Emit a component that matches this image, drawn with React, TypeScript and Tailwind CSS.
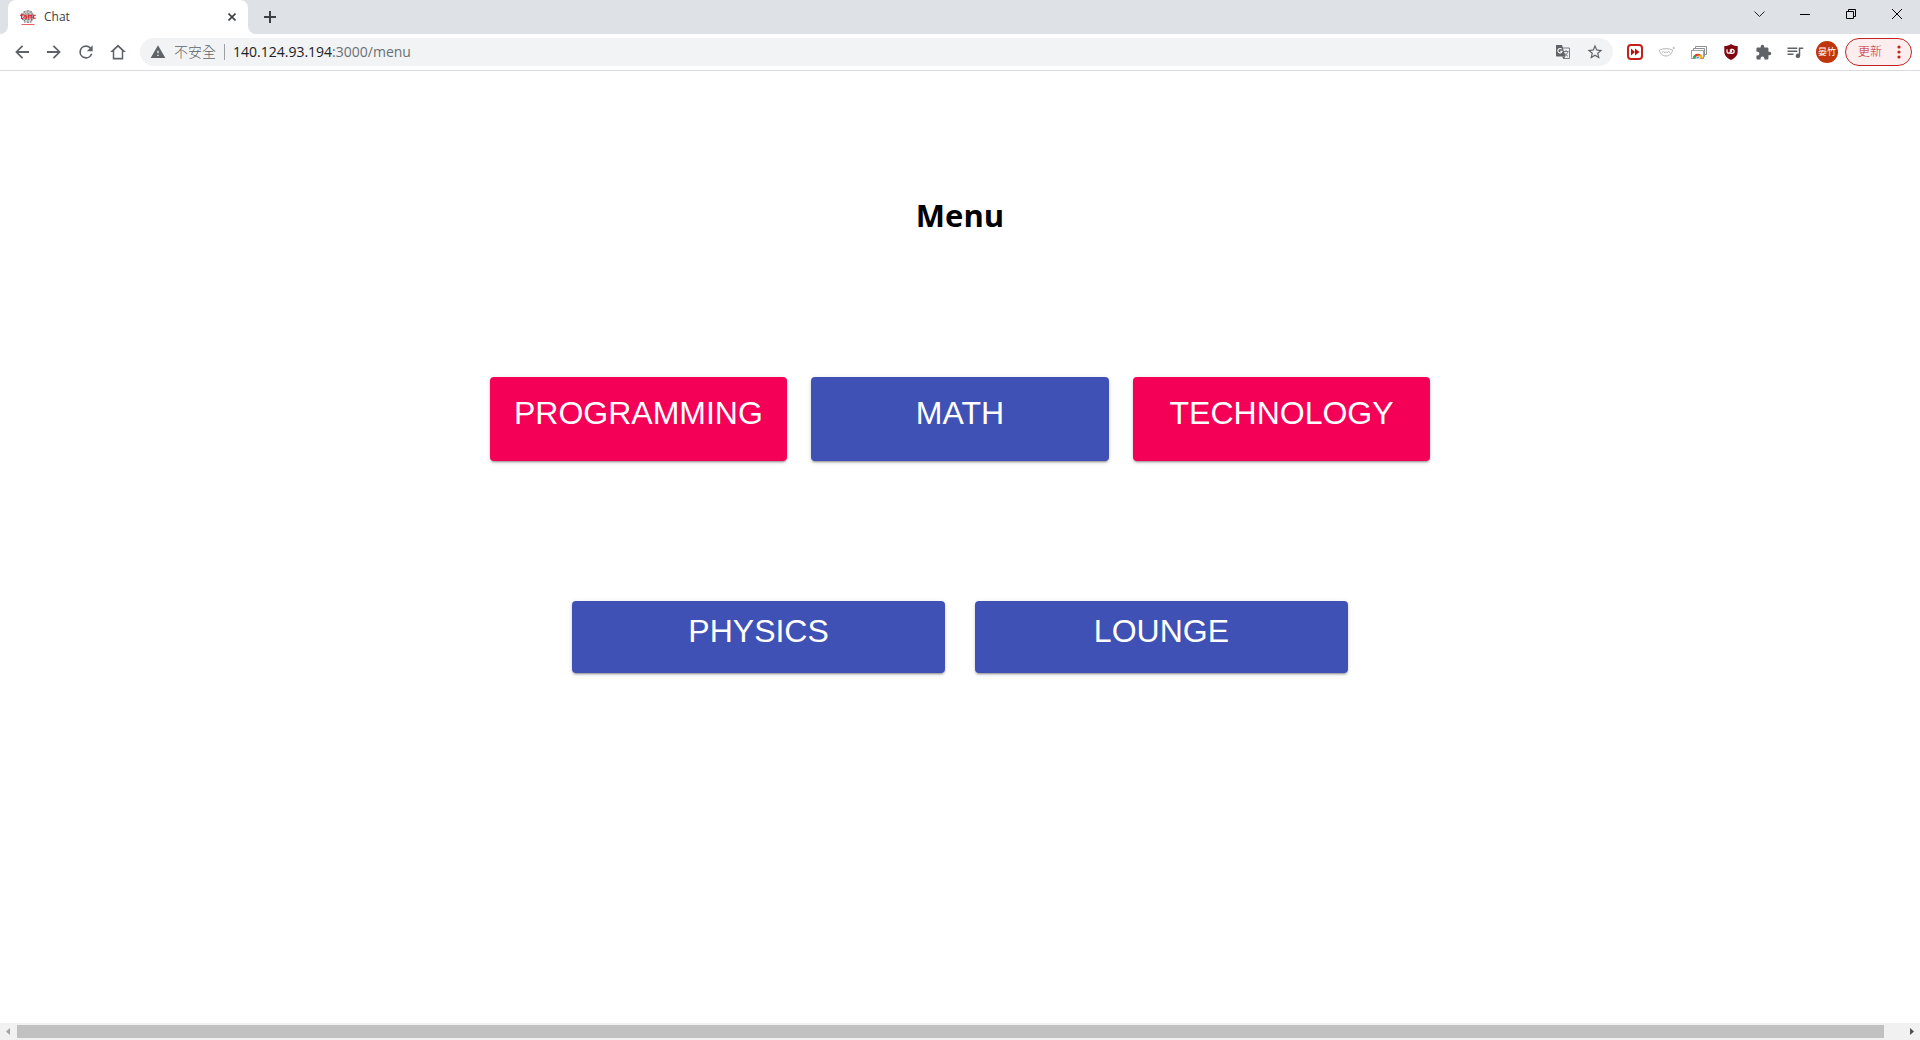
import React from "react";

const UI = "font-['Open_Sans','Noto_Sans_CJK_TC',sans-serif]";
const SHADOW =
  "shadow-[0_3px_1px_-2px_rgba(0,0,0,0.2),0_2px_2px_0_rgba(0,0,0,0.14),0_1px_5px_0_rgba(0,0,0,0.12)]";

function Favicon() {
  return (
    <svg width="16" height="17" viewBox="0 0 16 17" aria-hidden="true">
      <circle cx="8" cy="7.500" r="6.500" fill="#d2d2d2" />
      <path d="M3.500 3h9M2 5h12M2 10.500h12M4 13h8M8 1v13M5 2c-2 4-2 7 0 11M11 2c2 4 2 7 0 11" stroke="#777" strokeWidth="1" strokeDasharray="1.500 1.500" fill="none" />
      <path d="M1.500 4.500v5h1.500M0 6.300h3.200M6.800 6.300H4.800v1.400h1.700v1.600H4.200M8.300 9.800V6.300h3.400v3.500M10 6.300v3.500M15.800 6.300h-2.200v3h2.200" stroke="#e0202c" strokeWidth="1.100" fill="none" />
      <path d="M1.500 15.500h13" stroke="#ee5a62" strokeWidth="1" />
    </svg>
  );
}

function MIcon({ d, size = 20, color = "#5f6368" }: { d: string; size?: number; color?: string }) {
  return (
    <svg width={size} height={size} viewBox="0 0 24 24" fill={color} aria-hidden="true">
      <path d={d} />
    </svg>
  );
}

const PATHS = {
  back: "M20.500 10.800H7.830l5.590-5.390L11.900 3.900 3.800 12l8.100 8.100 1.510-1.510L7.830 13.200H20.500v-2.400z",
  forward: "M12.100 3.900l-1.510 1.510L16.170 10.800H3.500v2.400h12.670l-5.580 5.390 1.510 1.510 8.100-8.100z",
  reload:
    "M17.650 6.350A7.958 7.958 0 0 0 12 4a8 8 0 1 0 7.730 10h-2.080A6 6 0 1 1 12 6c1.660 0 3.140.690 4.220 1.780L13 11h7V4l-2.350 2.350z",
  home: "M12 2 1.500 12H5v10h14V12h3.500L12 2zm0 3.200 5 4.700v9.700H7V9.900l5-4.700z",
  warning: "M1 21h22L12 2 1 21zm12-3h-2v-2h2v2zm0-4h-2v-4h2v4z",
  star: "M22 9.240l-7.190-.620L12 2 9.190 8.630 2 9.240l5.460 4.730L5.820 21 12 17.270 18.180 21l-1.630-7.030L22 9.240zM12 15.400l-3.760 2.270 1-4.280-3.320-2.880 4.380-.380L12 6.100l1.710 4.040 4.380.380-3.320 2.880 1 4.280L12 15.400z",
  puzzle:
    "M20.500 11H19V7c0-1.100-.9-2-2-2h-4V3.500a2.500 2.500 0 0 0-5 0V5H4c-1.100 0-2 .9-2 2v3.800h1.500a2.700 2.700 0 0 1 0 5.400H2V20c0 1.100.9 2 2 2h3.800v-1.500a2.700 2.700 0 0 1 5.400 0V22H17c1.100 0 2-.9 2-2v-4h1.500a2.500 2.500 0 0 0 0-5z",
  queue:
    "M15 6H2v2h13V6zm0 4H2v2h13v-2zM2 16h8v-2H2v2zM17 6v8.180A3 3 0 1 0 19 17V8h4V6h-6z",
};

function ToolButton({ label, children }: { label: string; children: React.ReactNode }) {
  return (
    <button type="button" aria-label={label} className="flex h-7 w-8 shrink-0 items-center justify-center">
      {children}
    </button>
  );
}

function TranslateIcon() {
  return (
    <svg width="16" height="16" viewBox="0 0 16 16" fill="none" aria-hidden="true">
      <path d="M7 4h7.500v10.500H8.500" stroke="#7b7f83" strokeWidth="1" />
      <path d="M8.500 7.500h5M11 6v1.500M13 7.500c-.5 2-2 3.500-3.500 4.500M9.500 9c.8 1.500 2 2.500 3.500 3.300" stroke="#7b7f83" strokeWidth="1" />
      <path d="M1 1h6l3.500 11.500H1.500L1 12z" fill="#5f6368" />
      <path d="M7 12.500h3.500L8.500 15z" fill="#5f6368" />
      <path d="M6.700 5.200a2.200 2.200 0 1 0 .5 2H5.200" stroke="#fff" strokeWidth="1.100" />
    </svg>
  );
}

function FastForwardIcon() {
  return (
    <svg width="16" height="16" viewBox="0 0 16 16" aria-hidden="true">
      <rect x="1" y="1" width="14" height="14" rx="3" fill="#fff" stroke="#c4211c" strokeWidth="2" />
      <path d="M4 4.500 8 8l-4 3.500zM8 4.500 12.500 8 8 11.500z" fill="#b5120e" />
    </svg>
  );
}

function MaskIcon() {
  return (
    <svg width="16" height="16" viewBox="0 0 16 16" fill="none" stroke="#b4b4b4" aria-hidden="true">
      <path d="M0.500 6c3-1.800 10-1.800 13 0 0 3-3 6-6.500 6s-6.500-3-6.500-6z" />
      <path d="M3 8.500l1.500-1L6 8.800l1-1 1 1 1.500-1.300 1.500 1" />
      <circle cx="14.700" cy="4" r="0.700" />
    </svg>
  );
}

function ChromeTabsIcon() {
  return (
    <svg width="16" height="16" viewBox="0 0 16 16" fill="none" aria-hidden="true">
      <path d="M4.500 4V2.500h11v8H14" stroke="#8d8f91" />
      <path d="M2.500 6V4.500h11v8H13" stroke="#8d8f91" />
      <rect x="0.500" y="6.500" width="12" height="8" fill="#fff" stroke="#a0a2a4" />
      <path d="M2 14.500a4.800 4.800 0 0 1 9.600 0h-2.400L6.800 12z" fill="#e33b2e" />
      <path d="M2 14.500c0-1.500.5-2.500 1.200-3.400L6 14.500z" fill="#2da94f" />
      <path d="M11.600 14.500c0-1.300-.3-2.300-1-3.200H7l1.500 3.200z" fill="#fdbd00" />
      <path d="M4.800 14.500a2 2 0 0 1 4 0z" fill="#4285f4" stroke="#fff" strokeWidth="0.600" />
    </svg>
  );
}

function ShieldIcon() {
  return (
    <svg width="16" height="16" viewBox="0 0 16 16" fill="none" aria-hidden="true">
      <path d="M8 0c2 1.500 4 2 6.700 2v5.500c0 4-2.700 6.500-6.700 8.500-4-2-6.700-4.500-6.700-8.500V2C4 2 6 1.500 8 0z" fill="#800610" />
      <path d="M4 5.200v2.300a1.700 1.700 0 0 0 3.400 0V5.200M7.400 9.300h1.800a2 2 0 0 0 0-4H8.500v3" stroke="#fff" strokeWidth="1.200" />
    </svg>
  );
}

function TabStrip() {
  return (
    <div className="flex h-[34px] shrink-0 items-stretch bg-[#dee1e6]">
      <div className="flex w-2 items-end bg-white">
        <div className="h-full w-full rounded-br-lg bg-[#dee1e6]" />
      </div>
      <div className="bg-[#dee1e6]">
        <div className="flex h-full w-60 items-center rounded-t-lg bg-white pr-2 pl-3">
          <Favicon />
          <span className="ml-2 grow text-xs text-[#3c4043]">Chat</span>
          <button type="button" aria-label="Close tab" className="flex size-4 items-center justify-center">
            <svg width="8" height="8" viewBox="0 0 8 8" stroke="#3c4043" strokeWidth="1.600" aria-hidden="true">
              <path d="M0.500 0.500l7 7M7.500 0.500l-7 7" />
            </svg>
          </button>
        </div>
      </div>
      <div className="flex w-2 bg-white">
        <div className="h-full w-full rounded-bl-lg bg-[#dee1e6]" />
      </div>
      <button type="button" aria-label="New tab" className="flex w-7 items-center justify-center">
        <svg width="12" height="12" viewBox="0 0 12 12" stroke="#3c4043" strokeWidth="2" aria-hidden="true">
          <path d="M6 0v12M0 6h12" />
        </svg>
      </button>
      <div className="grow" />
      <div className="flex h-7 items-center">
        <button type="button" aria-label="Search tabs" className="flex w-[46px] justify-center">
          <svg width="11" height="7" viewBox="0 0 11 7" fill="none" stroke="#222" aria-hidden="true">
            <path d="M0.500 0.500l5 5 5-5" />
          </svg>
        </button>
        <button type="button" aria-label="Minimize" className="flex w-[46px] justify-center">
          <span className="h-px w-2.5 bg-black" />
        </button>
        <button type="button" aria-label="Restore" className="flex w-[46px] justify-center">
          <svg width="10" height="10" viewBox="0 0 10 10" fill="none" stroke="#000" aria-hidden="true">
            <path d="M0.500 2.500h7v7h-7zM2.500 2.500v-2h7v7h-2" />
          </svg>
        </button>
        <button type="button" aria-label="Close" className="flex w-[46px] justify-center">
          <svg width="10" height="10" viewBox="0 0 10 10" stroke="#000" aria-hidden="true">
            <path d="M0 0l10 10M10 0L0 10" />
          </svg>
        </button>
      </div>
    </div>
  );
}

function Toolbar() {
  return (
    <div className="flex h-[37px] shrink-0 items-center border-b border-[#d9dbde] bg-white pr-2 pl-1.5">
      <ToolButton label="Back"><MIcon d={PATHS.back} /></ToolButton>
      <ToolButton label="Forward"><MIcon d={PATHS.forward} /></ToolButton>
      <ToolButton label="Reload"><MIcon d={PATHS.reload} /></ToolButton>
      <ToolButton label="Home"><MIcon d={PATHS.home} size={18} /></ToolButton>
      <div className="mx-1.5 flex h-7 grow items-center rounded-full bg-[#f1f3f4] pr-0.5 pl-2.5">
        <MIcon d={PATHS.warning} size={16} />
        <span className="ml-2 text-sm font-light text-[#5f6368]">不安全</span>
        <span className="mx-2 h-4 w-px bg-[#9aa0a6]" />
        <span className="text-sm text-[#6b6f73]">
          <span className="text-[#202124]">140.124.93.194</span>:3000/menu
        </span>
        <span className="grow" />
        <ToolButton label="Translate this page"><TranslateIcon /></ToolButton>
        <ToolButton label="Bookmark this tab"><MIcon d={PATHS.star} size={18} /></ToolButton>
      </div>
      <ToolButton label="Fast forward"><FastForwardIcon /></ToolButton>
      <ToolButton label="Mask extension"><MaskIcon /></ToolButton>
      <ToolButton label="Tabs extension"><ChromeTabsIcon /></ToolButton>
      <ToolButton label="Content blocker"><ShieldIcon /></ToolButton>
      <ToolButton label="Extensions"><MIcon d={PATHS.puzzle} size={17} /></ToolButton>
      <ToolButton label="Media control"><MIcon d={PATHS.queue} size={18} /></ToolButton>
      <ToolButton label="Profile">
        <span className="flex size-[22px] items-center justify-center rounded-full bg-[#bf360c] text-[9px] text-white">晏竹</span>
      </ToolButton>
      <button
        type="button"
        className="ml-0.5 flex h-7 w-[67px] items-center justify-between rounded-full border border-[#c5221f] bg-[#fceeee] pr-2.5 pl-3 text-xs font-light text-[#c5221f]"
      >
        更新
        <svg width="4" height="14" viewBox="0 0 4 14" fill="#c5221f" aria-hidden="true">
          <circle cx="2" cy="2" r="1.600" />
          <circle cx="2" cy="7" r="1.600" />
          <circle cx="2" cy="12" r="1.600" />
        </svg>
      </button>
    </div>
  );
}

function RoomButton({ label, className }: { label: string; className: string }) {
  return (
    <button
      type="button"
      className={`flex flex-1 items-start justify-center rounded text-[32px] leading-10 text-white font-['Liberation_Sans',sans-serif] ${SHADOW} ${className}`}
    >
      {label}
    </button>
  );
}

function ScrollBar() {
  return (
    <div className="flex h-[17px] shrink-0 items-center bg-[#f1f1f1]" aria-hidden="true">
      <svg className="shrink-0" width="17" height="17" viewBox="0 0 17 17" fill="#a3a3a3">
        <path d="M10 5v7L6 8.500z" />
      </svg>
      <div className="h-[13px] grow bg-[#c1c1c1]" />
      <div className="w-[19px] shrink-0" />
      <svg className="shrink-0" width="17" height="17" viewBox="0 0 17 17" fill="#505050">
        <path d="M7 5v7l4-3.500z" />
      </svg>
    </div>
  );
}

export default function App() {
  return (
    <div className={`flex min-h-screen flex-col bg-white ${UI}`}>
      <TabStrip />
      <Toolbar />
      <main className="flex grow flex-col items-center">
        <h1 className="mt-[120px] text-[31px] leading-12 font-bold text-black">Menu</h1>
        <div className="mt-[138px] flex w-[49%] gap-6">
          <RoomButton label="PROGRAMMING" className="h-21 bg-[#f50057] pt-4" />
          <RoomButton label="MATH" className="h-21 bg-[#3f51b5] pt-4" />
          <RoomButton label="TECHNOLOGY" className="h-21 bg-[#f50057] pt-4" />
        </div>
        <div className="mt-[140px] flex w-[40.4%] gap-[30px]">
          <RoomButton label="PHYSICS" className="h-18 bg-[#3f51b5] pt-2.5" />
          <RoomButton label="LOUNGE" className="h-18 bg-[#3f51b5] pt-2.5" />
        </div>
      </main>
      <ScrollBar />
    </div>
  );
}
